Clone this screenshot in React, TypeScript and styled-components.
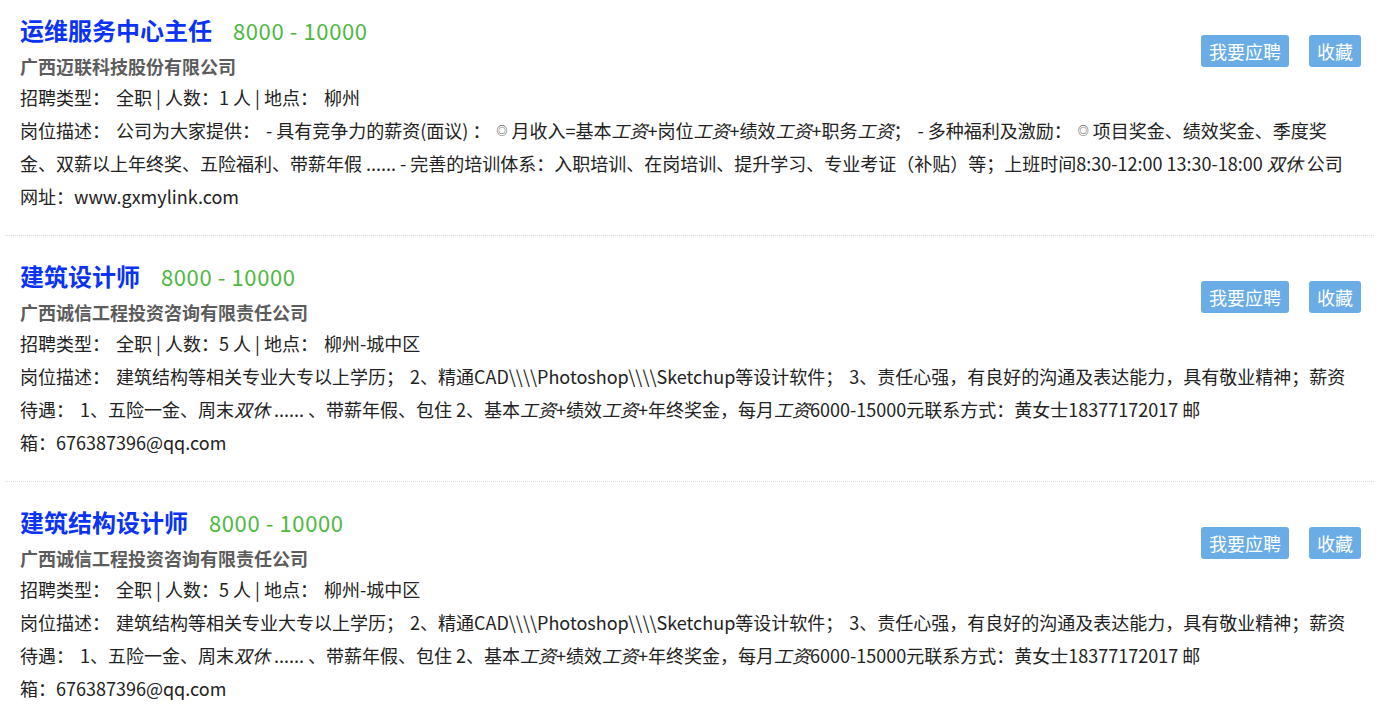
import styled, { createGlobalStyle } from "styled-components";

const GlobalStyle = createGlobalStyle`
  html, body {
    margin: 0;
    padding: 0;
    background: #fff;
  }

  body {
    font-family: "Noto Sans CJK SC", "Noto Sans", sans-serif;
    color: #222;
  }
`;

const JobList = styled.ul`
  list-style: none;
  margin: 0 5px;
  padding: 0;
`;

const JobItem = styled.li`
  padding: 20px 13px 22px 15px;
  border-bottom: 1px dotted #dcdcdc;

  &:first-child {
    padding-top: 10px;
  }
`;

const Header = styled.div`
  display: flex;
  justify-content: space-between;
  align-items: flex-start;
`;

const Info = styled.div`
  display: flex;
  flex-direction: column;
`;

const TitleRow = styled.div`
  display: flex;
  align-items: baseline;
  height: 42px;
  line-height: 40px;
`;

const Title = styled.a`
  font-size: 24px;
  font-weight: 700;
  color: #0b33f5;
  text-decoration: none;
`;

const Salary = styled.span`
  margin-left: 21px;
  font-size: 22px;
  letter-spacing: 0.6px;
  color: #4db83f;
`;

const Company = styled.div`
  font-size: 18px;
  font-weight: 700;
  color: #5c5c5c;
  line-height: 28px;
`;

const Meta = styled.div`
  font-size: 18px;
  line-height: 34px;
`;

const Gap = styled.span`
  display: inline-block;
  width: 6px;
`;

const Actions = styled.div`
  display: flex;
  gap: 20px;
  margin-top: 25px;
`;

const ActionButton = styled.button`
  height: 32px;
  padding: 0 8px;
  border: none;
  border-radius: 3px;
  background: #6aade6;
  color: #fff;
  font-family: inherit;
  font-size: 18px;
  line-height: 32px;
  cursor: pointer;
`;

const Description = styled.p`
  margin: 0;
  font-size: 18px;
  line-height: 33px;

  i {
    font-style: italic;
  }
`;

const Keep = styled.span`
  white-space: nowrap;
`;

const Mark = styled.span`
  font-size: 11px;
  vertical-align: 3px;
`;

interface IJob {
  title: string;
  company: string;
  count: number;
  place: string;
  desc: React.ReactNode;
}

const structureDesc = (
  <>
    建筑结构等相关专业大专以上学历；<Gap />2、精通CAD{"\\\\\\\\"}Photoshop{"\\\\\\\\"}Sketchup等设计软件；<Gap />3、责任心强，有良好的沟通及表达能力，具有敬业精神；薪资待遇：<Gap />1、五险一金、周末<i>双休</i> ...... 、带薪年假、包住 2、基本<i>工资</i>+绩效<i>工资</i>+年终奖金，每月<i>工资</i>6000-15000元联系方式：黄女士18377172017 邮<Keep>箱：676387396@qq.com</Keep>
  </>
);

const jobs: IJob[] = [
  {
    title: "运维服务中心主任",
    company: "广西迈联科技股份有限公司",
    count: 1,
    place: "柳州",
    desc: (
      <>
        公司为大家提供：<Gap />- 具有竞争力的薪资(面议) ：<Gap /><Mark>◎</Mark> 月收入=基本<i>工资</i>+岗位<i>工资</i>+绩效<i>工资</i>+职务<i>工资</i>；<Gap />- 多种福利及激励：<Gap /><Mark>◎</Mark> 项目奖金、绩效奖金、季度奖金、双薪以上年终奖、五险福利、带薪年假 ...... - 完善的培训体系：入职培训、在岗培训、提升学习、专业考证（补贴）等；上班时间8:30-12:00 13:30-18:00 <i>双休</i> 公司<Keep>网址：www.gxmylink.com</Keep>
      </>
    ),
  },
  {
    title: "建筑设计师",
    company: "广西诚信工程投资咨询有限责任公司",
    count: 5,
    place: "柳州-城中区",
    desc: structureDesc,
  },
  {
    title: "建筑结构设计师",
    company: "广西诚信工程投资咨询有限责任公司",
    count: 5,
    place: "柳州-城中区",
    desc: structureDesc,
  },
];

const App: React.FC = () => {
  return (
    <>
      <GlobalStyle />
      <JobList>
        {jobs.map((job) => (
          <JobItem key={job.title}>
            <Header>
              <Info>
                <TitleRow>
                  <Title href="#">{job.title}</Title>
                  <Salary>8000 - 10000</Salary>
                </TitleRow>
                <Company>{job.company}</Company>
                <Meta>
                  招聘类型：<Gap />全职 | 人数：{job.count} 人 | 地点：<Gap />
                  {job.place}
                </Meta>
              </Info>
              <Actions>
                <ActionButton>我要应聘</ActionButton>
                <ActionButton>收藏</ActionButton>
              </Actions>
            </Header>
            <Description>
              岗位描述：<Gap />
              {job.desc}
            </Description>
          </JobItem>
        ))}
      </JobList>
    </>
  );
};

export default App;
